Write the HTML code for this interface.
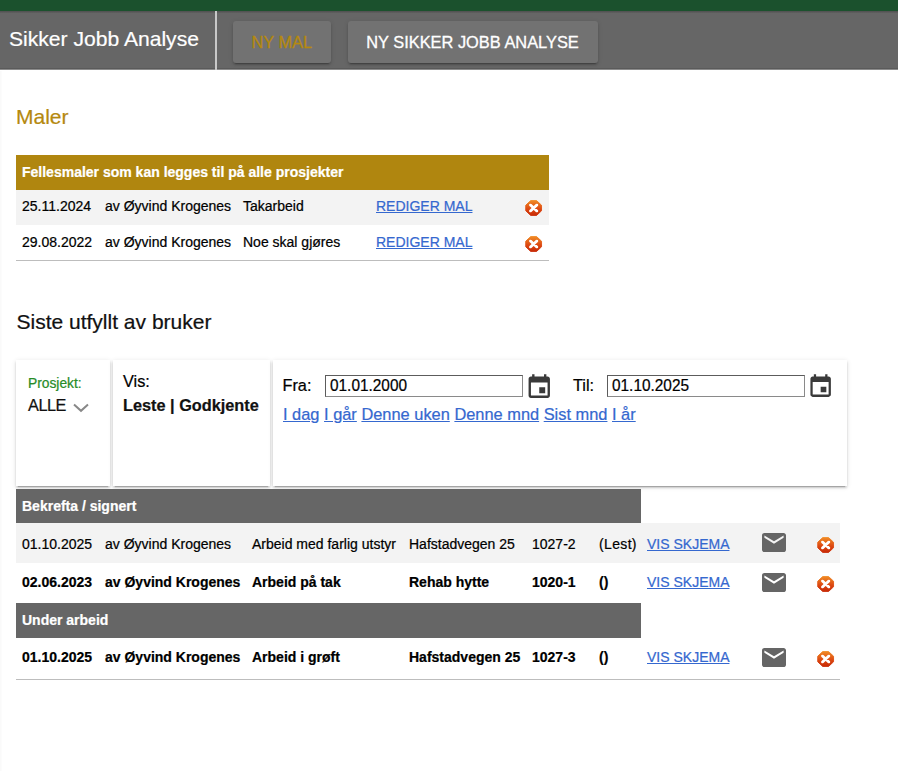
<!DOCTYPE html>
<html lang="no">
<head>
<meta charset="utf-8">
<title>Sikker Jobb Analyse</title>
<style>
*{box-sizing:border-box}
html,body{margin:0;padding:0}
body{-webkit-text-stroke:.22px;width:898px;height:771px;overflow:hidden;background:#fff;font-family:"Liberation Sans",Arial,sans-serif;color:#000;position:relative}
.abs{position:absolute;white-space:nowrap}
.top{position:absolute;left:0;top:0;width:898px;height:11px;background:#1b512d}
.bar{position:absolute;left:0;top:11px;width:898px;height:58px;background:linear-gradient(#4e4e4e,#666 2.5px,#666);border-bottom:1px solid #5a5a5a}
.barsh{position:absolute;left:0;top:69px;width:898px;height:1px;background:#8c8c8c}
.title{-webkit-text-stroke:.2px #fff;left:9px;top:26px;font-size:21.1px;color:#fff;line-height:26px}
.sep{position:absolute;left:215px;top:11px;width:2px;height:59px;background:#c8c8c8}
.btn{-webkit-text-stroke:.3px currentColor;position:absolute;top:21px;height:42px;background:#727272;border-radius:3px;box-shadow:0 3px 1px -2px rgba(0,0,0,.2),0 2px 2px 0 rgba(0,0,0,.14),0 1px 5px 0 rgba(0,0,0,.12);color:#fff;font-size:16.4px;line-height:42px;text-align:center;white-space:nowrap}
.b1{left:232.5px;width:98.5px;color:#b5890f}
.b2{left:347.5px;width:250px}
h2{position:absolute;margin:0;font-weight:normal;font-size:21px;line-height:24px;white-space:nowrap}
.h-maler{left:16px;top:105px;color:#b5890f}
.h-siste{left:16.5px;top:310px;color:#111;font-size:21px}
.t1{position:absolute;left:16px;top:155px;width:532.5px;font-size:14px}
.t1 .hd{height:35px;background:#b0860f;color:#fff;font-weight:bold;line-height:35px;padding-left:6px}
.row{position:relative;white-space:nowrap}
.row span,.row a{position:absolute;top:0}
.t1 .row{height:35px;line-height:35px}
.t1 .row.odd{background:#f3f3f3}
.end{height:1px;background:#bdbdbd}
a{color:#3568cf;text-decoration:underline}
.del{position:absolute;width:19.3px;height:18px}
.card{position:absolute;top:360px;height:126px;background:#fff;box-shadow:0 3px 1px -2px rgba(0,0,0,.2),0 2px 2px 0 rgba(0,0,0,.14),0 1px 5px 0 rgba(0,0,0,.12)}
.f16{font-size:16.3px;line-height:20px}
.inp{position:absolute;top:375px;height:22px;border:1px solid;border-color:#5c5c5c #8a8a8a #8a8a8a #5c5c5c;background:#fff;font-size:16.3px;line-height:19px;padding-left:4px;white-space:nowrap}
.sq{display:inline-block;transform:scaleX(.945);transform-origin:0 50%}
.t2{position:absolute;left:16px;top:488.5px;width:824px;font-size:14px}
.t2 .hd{height:34.5px;width:625px;background:#666;color:#fff;font-weight:bold;line-height:34.5px;padding-left:6px}
.t2 .row{height:40px;line-height:40px}
.t2 .row.odd{background:#f3f3f3}
.t2 .row.b{font-weight:bold}
.t2 .row.b a{font-weight:normal}
.mail{position:absolute;width:24px;height:19px}
</style>
</head>
<body>
<svg width="0" height="0" style="position:absolute">
  <defs>
    <linearGradient id="dg" x1="0" y1="0" x2="0" y2="1"><stop offset="0" stop-color="#f08a24"/><stop offset="0.55" stop-color="#dd4a12"/><stop offset="1" stop-color="#c82a06"/></linearGradient>
    <symbol id="del" viewBox="0 0 20 20" preserveAspectRatio="none">
      <path d="M6.6 1h6.8L19 6.6v6.8L13.400 19H6.6L1 13.400V6.6z" fill="#fff" opacity=".75"/>
      <path d="M6.900 1.800h6.200L18.200 6.900v6.200L13.100 18.200H6.900L1.800 13.100V6.900z" fill="url(#dg)" stroke="url(#dg)" stroke-width="1" stroke-linejoin="round"/>
      <path d="M6.700 6.700l6.600 6.600M13.300 6.700l-6.600 6.600" stroke="#fff" stroke-width="2.900" stroke-linecap="round"/>
    </symbol>
    <symbol id="cal" viewBox="0 0 24 24">
      <path fill="#3a3a3a" d="M19 3h-1V1h-2v2H8V1H6v2H5c-1.110 0-1.990.9-1.990 2L3 19c0 1.100.890 2 2 2h14c1.100 0 2-.9 2-2V5c0-1.100-.9-2-2-2zm0 16H5V8h14v11zm-7-7h5v5h-5z"/>
    </symbol>
    <symbol id="mail" viewBox="2 4 20 16" preserveAspectRatio="none">
      <path fill="#656565" d="M20 4H4c-1.100 0-1.990.9-1.990 2L2 18c0 1.100.9 2 2 2h16c1.100 0 2-.9 2-2V6c0-1.100-.9-2-2-2zm0 4l-8 5-8-5V6l8 5 8-5v2z"/>
    </symbol>
  </defs>
</svg>
<div style="position:absolute;left:0;top:71px;width:2px;height:700px;background:linear-gradient(90deg,#f9f9f9,#fdfdfd)"></div>
<div class="top"></div>
<div class="bar"></div>
<div class="barsh"></div>
<div class="abs title">Sikker Jobb Analyse</div>
<div class="sep"></div>
<div class="btn b1">NY MAL</div>
<div class="btn b2">NY SIKKER JOBB ANALYSE</div>

<h2 class="h-maler">Maler</h2>

<div class="t1">
  <div class="hd">Fellesmaler som kan legges til på alle prosjekter</div>
  <div class="row odd" style="line-height:33px"><span style="left:6px">25.11.2024</span><span style="left:89px">av Øyvind Krogenes</span><span style="left:227px">Takarbeid</span><a style="left:360px">REDIGER MAL</a></div>
  <div class="row"><span style="left:6px">29.08.2022</span><span style="left:89px">av Øyvind Krogenes</span><span style="left:227px">Noe skal gjøres</span><a style="left:360px">REDIGER MAL</a></div>
  <div class="end"></div>
</div>
<svg class="del" style="left:524.28px;top:198.81px"><use href="#del"/></svg>
<svg class="del" style="left:524.28px;top:235.04px"><use href="#del"/></svg>

<h2 class="h-siste">Siste utfyllt av bruker</h2>

<div class="card" style="left:16px;width:94px"></div>
<div class="card" style="left:113px;width:157px"></div>
<div class="card" style="left:273px;width:574px"></div>
<div class="abs" style="left:28px;top:376px;font-size:13.800px;line-height:16px;color:#278c27">Prosjekt:</div>
<div class="abs" style="left:28px;top:395px;font-size:16.300px;line-height:20px;letter-spacing:-.45px;color:#111">ALLE</div>
<svg class="abs" style="left:72px;top:402.300px" width="18" height="11" viewBox="0 0 18 11"><path d="M2 2.500l7 6.300 7-6.300" fill="none" stroke="#888" stroke-width="2"/></svg>
<div class="abs f16" style="left:123px;top:371px">Vis:</div>
<div class="abs f16" style="left:123px;top:395px;font-weight:bold;color:#111">Leste | Godkjente</div>
<div class="abs f16" style="left:282.500px;top:375px">Fra:</div>
<div class="inp" style="left:325px;width:198px"><span class="sq">01.01.2000</span></div>
<svg class="abs" style="left:524.500px;top:372.700px" width="28.500" height="28.500"><use href="#cal"/></svg>
<div class="abs f16" style="left:573px;top:375px">Til:</div>
<div class="inp" style="left:607px;width:198px"><span class="sq">01.10.2025</span></div>
<svg class="abs" style="left:806.500px;top:372.800px" width="27.300" height="27.300"><use href="#cal"/></svg>
<div class="abs" style="left:283px;top:404px;font-size:16.400px;line-height:20px"><a>I dag</a> <a>I går</a> <a>Denne uken</a> <a>Denne mnd</a> <a>Sist mnd</a> <a>I år</a></div>

<div class="t2">
  <div class="hd">Bekrefta / signert</div>
  <div class="row odd" style="line-height:42px"><span style="left:6px">01.10.2025</span><span style="left:89px">av Øyvind Krogenes</span><span style="left:236px">Arbeid med farlig utstyr</span><span style="left:393px">Hafstadvegen 25</span><span style="left:516px">1027-2</span><span style="left:583px;letter-spacing:.35px">(Lest)</span><a style="left:631px">VIS SKJEMA</a></div>
  <div class="row b" style="line-height:38px"><span style="left:6px">02.06.2023</span><span style="left:89px">av Øyvind Krogenes</span><span style="left:236px">Arbeid på tak</span><span style="left:393px">Rehab hytte</span><span style="left:516px">1020-1</span><span style="left:583px">()</span><a style="left:631px">VIS SKJEMA</a></div>
  <div class="hd" style="height:35px;line-height:35px">Under arbeid</div>
  <div class="row b" style="height:41px;line-height:39px"><span style="left:6px">01.10.2025</span><span style="left:89px">av Øyvind Krogenes</span><span style="left:236px">Arbeid i grøft</span><span style="left:393px">Hafstadvegen 25</span><span style="left:516px">1027-3</span><span style="left:583px">()</span><a style="left:631px">VIS SKJEMA</a></div>
  <div class="end"></div>
</div>
<svg class="mail" style="left:761.6px;top:533.3px"><use href="#mail"/></svg>
<svg class="mail" style="left:761.6px;top:573.4px"><use href="#mail"/></svg>
<svg class="mail" style="left:761.6px;top:648.4px"><use href="#mail"/></svg>
<svg class="del" style="left:815.8px;top:536.2px"><use href="#del"/></svg>
<svg class="del" style="left:815.8px;top:575.07px"><use href="#del"/></svg>
<svg class="del" style="left:815.8px;top:650.05px"><use href="#del"/></svg>
</body>
</html>
